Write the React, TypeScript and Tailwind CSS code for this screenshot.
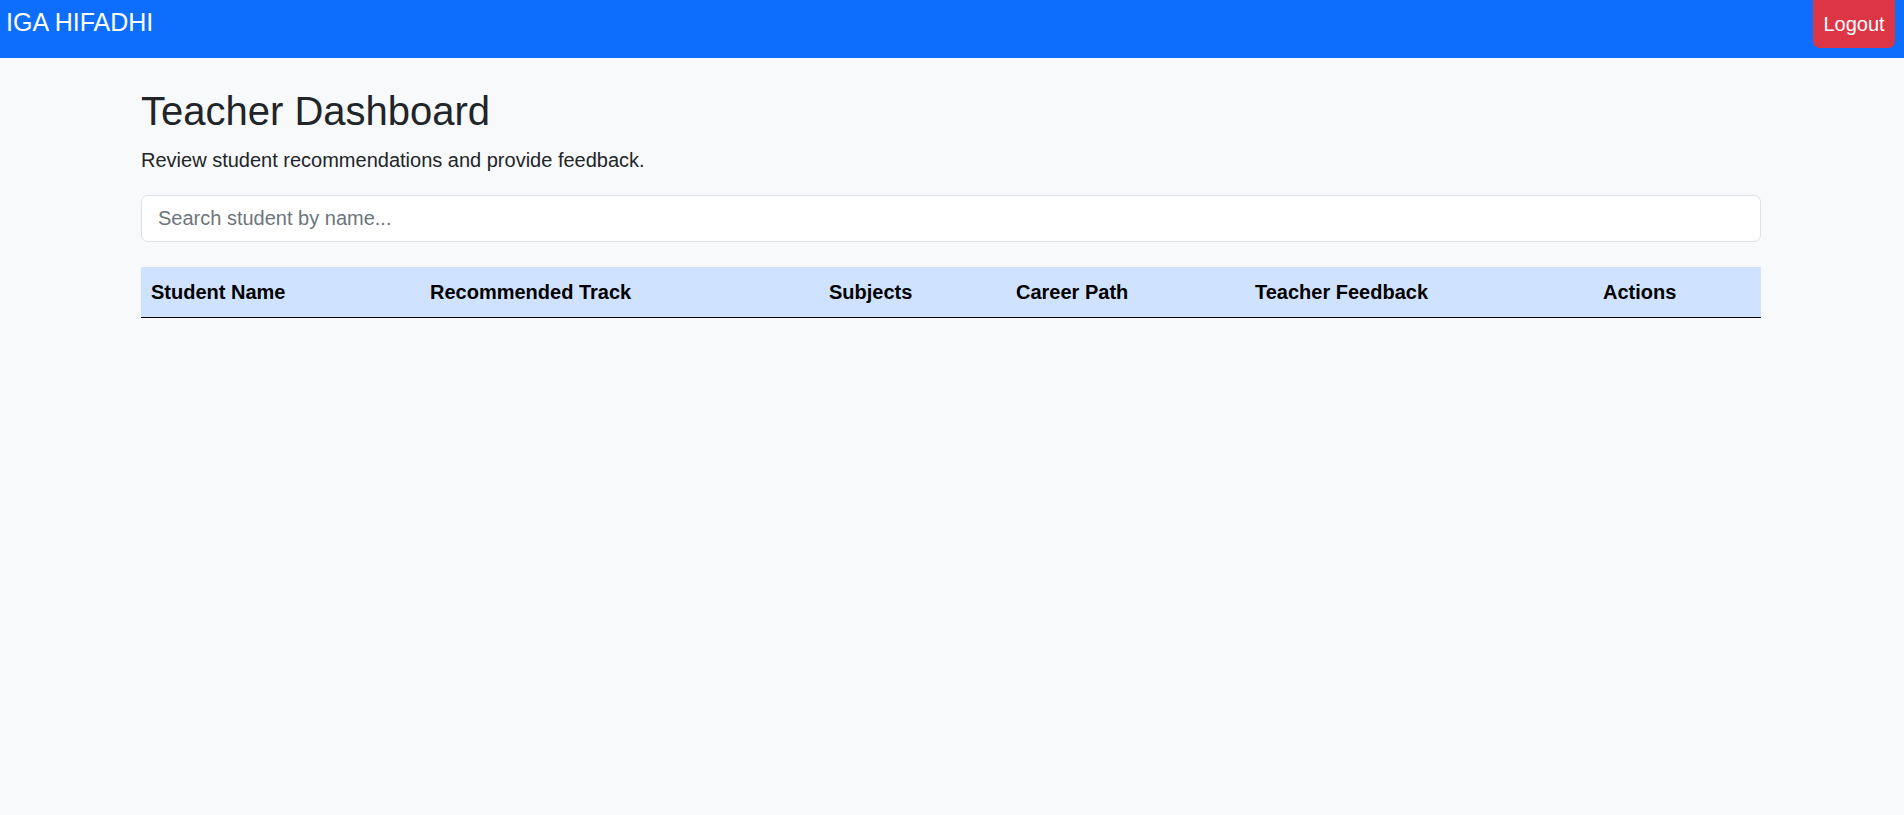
import React from "react";

export default function App() {
  const cols = [
    { label: "Student Name", w: "w-[279px]" },
    { label: "Recommended Track", w: "w-[399px]" },
    { label: "Subjects", w: "w-[187px]" },
    { label: "Career Path", w: "w-[239px]" },
    { label: "Teacher Feedback", w: "w-[348px]" },
    { label: "Actions", w: "w-[168px]" },
  ];
  return (
    <div
      className="min-h-[815px] bg-[#f8f9fa] text-[#212529]"
      style={{ fontFamily: '"Liberation Sans", Arial, sans-serif' }}
    >
      <nav className="h-[58px] bg-[#0d6efd] flex items-start justify-between">
        <span className="pl-[6px] pt-[4px] text-[25px] leading-[37px] text-white">
          IGA HIFADHI
        </span>
        <button className="mr-[9px] w-[82px] h-[48px] bg-[#dc3545] text-white text-[20px] leading-[30px] rounded-b-[7px]">
          Logout
        </button>
      </nav>
      <div className="pl-[141px]">
        <div className="w-[1620px]">
          <h2 className="mt-[29px] mb-[10px] text-[40px] leading-[48px] font-normal">
            Teacher Dashboard
          </h2>
          <p className="mb-[20px] text-[20px] leading-[30px]">
            Review student recommendations and provide feedback.
          </p>
          <input
            type="text"
            placeholder="Search student by name..."
            className="block w-full h-[47px] bg-white border border-[#dee2e6] rounded-[7px] px-[16px] text-[20px] placeholder:text-[#6c757d] outline-none"
          />
          <table className="mt-[25px] w-full table-fixed border-collapse">
            <thead>
              <tr className="bg-[#cfe2ff] border-b border-black">
                {cols.map((c) => (
                  <th
                    key={c.label}
                    className={`${c.w} h-[50px] px-[10px] text-left text-[20px] leading-[30px] font-bold text-black`}
                  >
                    {c.label}
                  </th>
                ))}
              </tr>
            </thead>
            <tbody></tbody>
          </table>
        </div>
      </div>
    </div>
  );
}
